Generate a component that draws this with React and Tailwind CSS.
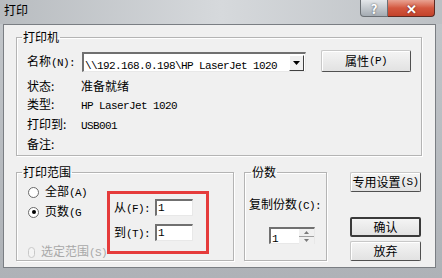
import React from "react";

const A = ({ children }) => (
  <span className="font-['Liberation_Mono'] text-[11px] tracking-[-0.6px]">{children}</span>
);

const Group = ({ title, className, legendClass, children }) => (
  <fieldset
    className={
      "border border-[#b4b4b4] shadow-[inset_1px_1px_0_#ffffff,1px_1px_0_#ffffff] " + className
    }
  >
    <legend className={"px-[1px] text-[12px] leading-[14px] " + legendClass}>{title}</legend>
    {children}
  </fieldset>
);

const Btn = ({ children, className = "", def = false }) => (
  <div
    className={
      "flex items-center justify-center text-[12px] leading-none rounded-[2px] bg-gradient-to-b from-[#f4f4f4] to-[#e2e2e2] " +
      (def
        ? "border-2 border-[#3a3a3a] "
        : "border border-t-[#c8c8c8] border-l-[#c8c8c8] border-b-[#505050] border-r-[#505050] shadow-[inset_1px_1px_0_#ffffff] ") +
      className
    }
  >
    {children}
  </div>
);

const Sunken = ({ className = "", children }) => (
  <div
    className={
      "bg-white border-t-2 border-l-2 border-b border-r border-t-[#707070] border-l-[#707070] border-b-[#e8e8e8] border-r-[#e8e8e8] " +
      className
    }
  >
    {children}
  </div>
);

const Radio = ({ checked, disabled }) => (
  <span
    className={
      "w-[11px] h-[11px] rounded-full border flex items-center justify-center " +
      (disabled ? "border-[#c8c8c8] bg-[#f4f4f4]" : "border-[#6a6a6a] bg-white")
    }
  >
    {checked && <span className="w-[4px] h-[4px] rounded-full bg-black" />}
  </span>
);

export default function App() {
  return (
    <div
      className="w-[442px] h-[278px] overflow-hidden bg-gradient-to-b from-[#c3c7cb] to-[#aeb2b7] text-black"
      style={{ fontFamily: '"Noto Sans CJK SC", "Liberation Sans", sans-serif' }}
    >
      {/* title bar */}
      <div className="h-[24px] flex items-start bg-gradient-to-r from-[#b8bcc0] via-[#d6d9dc] to-[#bcc0c4]">
        <div className="pl-[4px] pt-[3px] text-[12px] leading-[14px]">打印</div>
        <div className="ml-auto mr-[7px] flex">
          <div className="w-[28px] h-[17px] rounded-bl-[4px] border border-t-0 border-[#6b7075] bg-gradient-to-b from-[#e4e7ea] to-[#a4abb2] flex items-center justify-center text-white font-bold text-[13px] leading-none [text-shadow:0_0_2px_#44484c]">
            ?
          </div>
          <div className="w-[47px] h-[17px] rounded-br-[4px] border border-t-0 border-l-0 border-[#5e2a22] bg-gradient-to-b from-[#e8a292] via-[#d3573f] to-[#c3422a] flex items-center justify-center text-white font-bold text-[13px] leading-none [text-shadow:0_0_2px_#5a1a10]">
            ✕
          </div>
        </div>
      </div>

      {/* client area */}
      <div className="ml-[3px] w-[433px] h-[244px] border border-[#7a7e83] bg-[#f0f0f0] flex flex-col">
        {/* printer group */}
        <Group title="打印机" className="ml-[12px] mt-[5px] w-[406px] h-[126px]" legendClass="ml-[5px]">
          <div className="flex items-start pl-[10px] mt-[6px] h-[22px]">
            <div className="w-[55px] mt-[4px] text-[12px] leading-[14px] whitespace-nowrap">
              名称<A>(N):</A>
            </div>
            <Sunken className="mt-[2px] w-[224px] h-[20px] flex items-center">
              <div className="flex-1 pl-[1px] leading-none whitespace-nowrap overflow-hidden">
                <A>\\192.168.0.198\HP LaserJet 1020</A>
              </div>
              <div className="w-[15px] h-[16px] mr-[1px] bg-[#f0f0f0] border border-t-[#ffffff] border-l-[#ffffff] border-b-[#404040] border-r-[#404040] flex items-center justify-center">
                <svg width="7" height="4" viewBox="0 0 7 4">
                  <path d="M0 0h7L3.5 4z" fill="#000" />
                </svg>
              </div>
            </Sunken>
            <Btn className="ml-[15px] w-[90px] h-[22px]">
              属性<A>(P)</A>
            </Btn>
          </div>
          <div className="mt-[5px] pl-[10px] text-[12px] leading-[18px]">
            <div className="flex">
              <div className="w-[54px]">状态:</div>
              <div>准备就绪</div>
            </div>
            <div className="flex">
              <div className="w-[54px]">类型:</div>
              <div><A>HP LaserJet 1020</A></div>
            </div>
            <div className="flex">
              <div className="w-[54px]">打印到:</div>
              <div><A>USB001</A></div>
            </div>
            <div className="flex">
              <div className="w-[54px]">备注:</div>
            </div>
          </div>
        </Group>

        <div className="flex items-start mt-[9px] ml-[12px]">
          {/* range group */}
          <Group title="打印范围" className="w-[218px] h-[96px]" legendClass="ml-[5px]">
            <div className="flex items-start">
              <div className="w-[90px] overflow-hidden pl-[11px] text-[12px]">
                <div className="mt-[3px] h-[20px] flex items-center gap-[6px] whitespace-nowrap">
                  <Radio />
                  <span>全部<A>(A)</A></span>
                </div>
                <div className="h-[20px] flex items-center gap-[6px] whitespace-nowrap">
                  <Radio checked />
                  <span>页数<A>(G</A></span>
                </div>
                <div className="mt-[22px] h-[16px] flex items-center gap-[6px] whitespace-nowrap text-[#a8a8a8]">
                  <Radio disabled />
                  <span>选定范围<A>(S)</A></span>
                </div>
              </div>
              <div className="mt-[12px] w-[102px] h-[63px] border-[3px] border-[#e53b3b] pl-[4px] pt-[5px] text-[12px]">
                <div className="flex items-center h-[17px]">
                  <div className="w-[41px] whitespace-nowrap">从<A>(F):</A></div>
                  <Sunken className="w-[38px] h-[17px] flex items-center pl-[1px]"><A>1</A></Sunken>
                </div>
                <div className="mt-[8px] flex items-center h-[17px]">
                  <div className="w-[41px] whitespace-nowrap">到<A>(T):</A></div>
                  <Sunken className="w-[38px] h-[17px] flex items-center pl-[1px]"><A>1</A></Sunken>
                </div>
              </div>
            </div>
          </Group>

          {/* copies group */}
          <Group title="份数" className="ml-[10px] w-[83px] h-[96px]" legendClass="ml-[6px]">
            <div className="mt-[17px] pl-[4px] text-[12px] leading-[16px] whitespace-nowrap">
              复制份数<A>(C):</A>
            </div>
            <Sunken className="mt-[13px] ml-[24px] w-[46px] h-[17px] flex items-center">
              <div className="flex-1 pl-[1px] leading-none"><A>1</A></div>
              <div className="w-[15px] h-[15px] flex flex-col">
                <div className="flex-1 bg-[#f0f0f0] border-b border-[#a0a0a0] flex items-center justify-center">
                  <svg width="5" height="3" viewBox="0 0 5 3"><path d="M0 3h5L2.5 0z" fill="#7a7a7a" /></svg>
                </div>
                <div className="flex-1 bg-[#f0f0f0] flex items-center justify-center">
                  <svg width="5" height="3" viewBox="0 0 5 3"><path d="M0 0h5L2.5 3z" fill="#7a7a7a" /></svg>
                </div>
              </div>
            </Sunken>
          </Group>

          {/* buttons */}
          <div className="ml-[23px] mt-[7px] flex flex-col">
            <Btn className="w-[71px] h-[20px]">专用设置<A>(S)</A></Btn>
            <Btn def className="mt-[25px] w-[71px] h-[20px]">确认</Btn>
            <Btn className="mt-[4px] w-[71px] h-[20px]">放弃</Btn>
          </div>
        </div>
      </div>
    </div>
  );
}
